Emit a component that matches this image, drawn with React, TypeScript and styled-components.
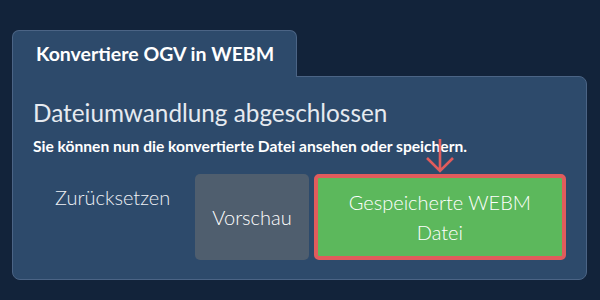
import styled, { createGlobalStyle } from 'styled-components'

const Global = createGlobalStyle`
  html, body {
    margin: 0;
    padding: 0;
    background: #12233a;
  }
  body {
    font-family: Lato, "Open Sans", sans-serif;
    color: #e8ecf1;
  }
`

const Page = styled.div`
  width: 600px;
  height: 300px;
  box-sizing: border-box;
  padding: 30px 0 0 12px;
`

const Tab = styled.div`
  position: relative;
  z-index: 1;
  width: 285px;
  height: 47px;
  box-sizing: border-box;
  margin-bottom: -1px;
  padding: 11px 0 0 23px;
  background: #2d4a6b;
  border: 1px solid #4b6485;
  border-bottom: none;
  border-radius: 7px 7px 0 0;
  font-size: 19.5px;
  font-weight: 700;
  color: #ffffff;
`

const Card = styled.div`
  width: 575px;
  height: 204px;
  box-sizing: border-box;
  padding: 20px 20px 0 20px;
  background: #2d4a6b;
  border: 1px solid #4b6485;
  border-radius: 0 8px 8px 8px;
`

const Heading = styled.h2`
  margin: 0;
  font-size: 24.3px;
  font-weight: 400;
  line-height: 32px;
  color: #e6eaf0;
`

const Sub = styled.p`
  margin: 7px 0 0 0;
  font-size: 15.6px;
  font-weight: 700;
  line-height: 20px;
  color: #ffffff;
`

const Actions = styled.div`
  display: flex;
  align-items: flex-start;
  gap: 5px;
  margin-top: 18px;
`

const Button = styled.button<{ $variant?: 'link' | 'grey' | 'green' }>`
  position: relative;
  box-sizing: border-box;
  margin: 0;
  font-family: Lato, "Open Sans", sans-serif;
  font-size: 20px;
  font-weight: 300;
  line-height: 30px;
  color: #ffffff;
  border-radius: 5px;
  cursor: pointer;
  ${p =>
    p.$variant === 'link'
      ? `
    background: transparent;
    border: none;
    padding: 8px 20px 8px 22px;
    color: #eef1f5;
  `
      : p.$variant === 'grey'
      ? `
    background: #4f5e6e;
    border: none;
    height: 86px;
    padding: 0 17px;
  `
      : `
    background: #5cb85c;
    border: 4px solid #e05c5c;
    height: 86px;
    width: 254px;
    padding: 0 12px;
  `}
`

const Arrow = styled.svg`
  position: absolute;
  left: 50%;
  bottom: 100%;
  margin-bottom: 5px;
  transform: translateX(-50%);
`

export default function App() {
  return (
    <>
      <Global />
      <Page>
        <Tab>Konvertiere OGV in WEBM</Tab>
        <Card>
          <Heading>Dateiumwandlung abgeschlossen</Heading>
          <Sub>Sie können nun die konvertierte Datei ansehen oder speichern.</Sub>
          <Actions>
            <Button $variant="link">Zurücksetzen</Button>
            <Button $variant="grey">Vorschau</Button>
            <Button $variant="green">
              <Arrow width="30" height="35" viewBox="0 0 30 35">
                <path
                  d="M15 1 V33 M2 20 L15 33 L28 20"
                  fill="none"
                  stroke="#e05c5c"
                  strokeWidth="2.6"
                />
              </Arrow>
              Gespeicherte WEBM Datei
            </Button>
          </Actions>
        </Card>
      </Page>
    </>
  )
}
